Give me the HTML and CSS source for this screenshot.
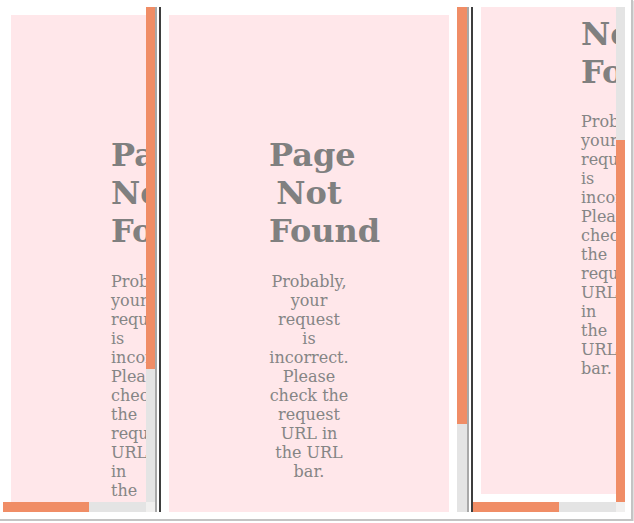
FILE: index.html
```html
<!DOCTYPE html>
<html lang="en">
<head>
<meta charset="utf-8">
<title>Page Not Found</title>
<link rel="stylesheet" href="styles.css">
</head>
<body>
<div class="window">
  <div class="pane pane-side">
    <div class="viewport">
      <div class="doc">
        <div class="card">
          <h1 class="title">Page Not Found</h1>
          <p class="message">Probably, your request is incorrect. Please check the request URL in the URL bar.</p>
        </div>
      </div>
    </div>
    <div class="vbar"><div class="vthumb thumb-side"></div></div>
    <div class="hbar"><div class="hthumb"></div></div>
    <div class="corner"></div>
  </div>
  <div class="splitter"></div>
  <div class="pane pane-main">
    <div class="viewport">
      <div class="doc">
        <div class="card">
          <h1 class="title">Page Not Found</h1>
          <p class="message">Probably, your request is incorrect. Please check the request URL in the URL bar.</p>
        </div>
      </div>
    </div>
    <div class="vbar"><div class="vthumb thumb-main"></div></div>
  </div>
  <div class="splitter"></div>
  <div class="pane pane-side">
    <div class="viewport viewport-end">
      <div class="doc">
        <div class="card">
          <h1 class="title">Page Not Found</h1>
          <p class="message">Probably, your request is incorrect. Please check the request URL in the URL bar.</p>
        </div>
      </div>
    </div>
    <div class="vbar vbar-end"><div class="vthumb thumb-side"></div></div>
    <div class="hbar"><div class="hthumb"></div></div>
    <div class="corner"></div>
  </div>
</div>
</body>
</html>
```

FILE: styles.css
```css
html, body {
  margin: 0;
  padding: 0;
  background: #ffffff;
}

.window {
  box-sizing: border-box;
  width: 633px;
  height: 521px;
  padding: 7px 6px 7px 3px;
  display: flex;
  background: #ffffff;
  border-right: 2px solid #c4c4c4;
  border-bottom: 2px solid #c4c4c4;
  box-shadow: 1px 1px 1px rgba(0, 0, 0, 0.12);
}

.pane {
  display: grid;
  min-width: 0;
  min-height: 0;
}

.pane-side {
  width: 152px;
  flex: 0 0 152px;
  grid-template-columns: 1fr 9px;
  grid-template-rows: 1fr 10px;
}

.pane-main {
  flex: 1 1 auto;
  grid-template-columns: 1fr 10px;
  grid-template-rows: 1fr;
}

.viewport {
  overflow: hidden;
  min-width: 0;
  min-height: 0;
  background: #ffffff;
}

.viewport-end {
  display: flex;
  flex-direction: column;
  justify-content: flex-end;
}

.doc {
  padding: 8px;
  flex-shrink: 0;
  font-family: "DejaVu Serif", serif;
}

.card {
  background: #ffe7ea;
  padding: 100px;
  text-align: center;
  color: #808080;
}

.title {
  font-size: 32px;
  font-weight: bold;
  margin: 0.67em 0;
}

.message {
  font-size: 16px;
  margin: 16px 0;
  color: #858585;
}

.vbar {
  background: #e4e4e4;
  display: flex;
  flex-direction: column;
}

.vbar-end {
  justify-content: flex-end;
}

.vthumb {
  background: #f08d66;
}

.thumb-side {
  height: 362px;
}

.thumb-main {
  height: 417px;
}

.hbar {
  background: #e4e4e4;
  display: flex;
}

.hthumb {
  width: 86px;
  background: #f08d66;
}

.corner {
  background: #f1f0ef;
}

.splitter {
  flex: 0 0 6px;
  box-sizing: border-box;
  border-left: 2px solid #a8a8a8;
  border-right: 2px solid #3e3e3e;
  background: #ffffff;
}
```
